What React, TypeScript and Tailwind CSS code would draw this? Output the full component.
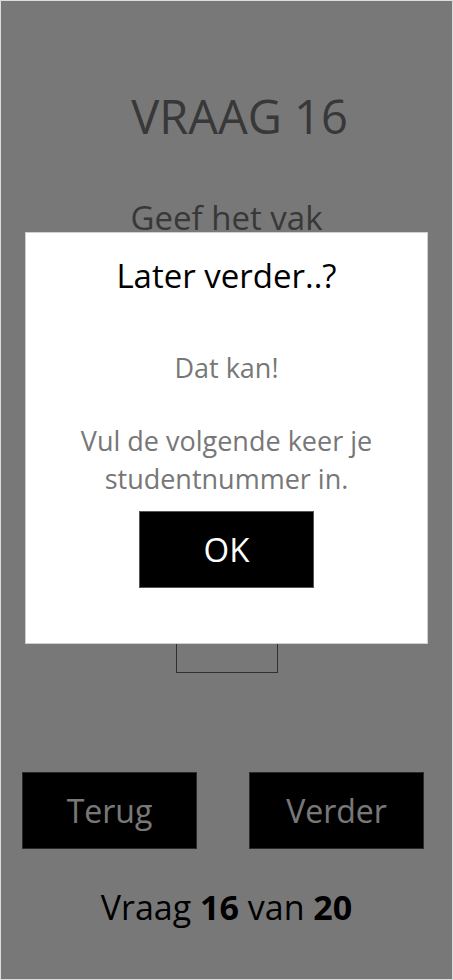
const font = { fontFamily: '"Open Sans", "Noto Sans", sans-serif' }

const App = () => {
  return (
    <div
      className="relative w-[453px] h-[980px] bg-white border border-[#dcdcdc] overflow-hidden"
      style={font}
    >
      <div className="flex flex-col items-center h-full">
        <h1 className="mt-[87px] pl-[26px] text-[47px] leading-[56px] text-[#777777]">
          VRAAG 16
        </h1>
        <p className="mt-[52px] text-[33px] leading-[43px] text-[#777777]">Geef het vak</p>
        <div className="mt-[374px] w-[102px] h-[60px] border border-[#666666]"></div>

        <div className="mt-[99px] w-full flex gap-[52px] pl-[21px]">
          <button className="w-[175px] h-[77px] bg-black border border-[#5a5a5a] text-white text-[32px]">
            Terug
          </button>
          <button className="w-[175px] h-[77px] bg-black border border-[#5a5a5a] text-white text-[32px]">
            Verder
          </button>
        </div>

        <p className="mt-[35px] text-[34px] leading-[46px] text-black">
          Vraag <b className="font-bold">16</b> van <b className="font-bold">20</b>
        </p>
      </div>

      <div className="absolute inset-0 bg-black/[0.53] flex flex-col items-center">
        <div className="mt-[231px] w-[403px] h-[412px] bg-white border border-[#cfcfcf] flex flex-col items-center">
          <h2 className="mt-[21px] text-[33px] leading-[44px] text-black">Later verder..?</h2>
          <p className="mt-[51px] text-[27px] leading-[38px] text-[#777777]">Dat kan!</p>
          <p className="mt-[35px] text-[27px] leading-[38px] text-[#777777] text-center">
            Vul de volgende keer je
            <br />
            studentnummer in.
          </p>
          <button className="mt-[13px] w-[175px] h-[77px] bg-black border border-[#555555] text-white text-[33px]">
            OK
          </button>
        </div>
      </div>
    </div>
  )
}

export default App
